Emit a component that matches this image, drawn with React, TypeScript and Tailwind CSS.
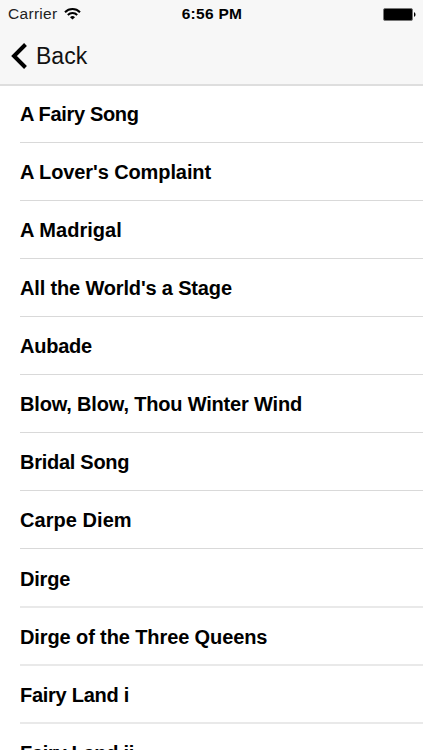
type Row = { name: string; tracking: string };

const rows: Row[] = [
  { name: 'A Fairy Song', tracking: 'tracking-[-0.33px]' },
  { name: "A Lover's Complaint", tracking: 'tracking-[-0.1px]' },
  { name: 'A Madrigal', tracking: 'tracking-[0.03px]' },
  { name: "All the World's a Stage", tracking: 'tracking-[-0.16px]' },
  { name: 'Aubade', tracking: 'tracking-[-0.25px]' },
  { name: 'Blow, Blow, Thou Winter Wind', tracking: 'tracking-[-0.18px]' },
  { name: 'Bridal Song', tracking: 'tracking-[-0.27px]' },
  { name: 'Carpe Diem', tracking: 'tracking-[0.05px]' },
  { name: 'Dirge', tracking: 'tracking-[-0.2px]' },
  { name: 'Dirge of the Three Queens', tracking: 'tracking-[-0.11px]' },
  { name: 'Fairy Land i', tracking: 'tracking-[-0.27px]' },
  { name: 'Fairy Land ii', tracking: 'tracking-[-0.3px]' },
];

function rowShape(index: number) {
  if (index < 8) return 'h-[58px] border-b border-[#d9d9d9] pt-[15px]';
  if (index === 8) return 'h-[59px] border-b-2 border-[#e9e9e9] pt-4';
  return 'h-[58px] border-b-2 border-[#e9e9e9] pt-[15px]';
}

export default function App() {
  return (
    <div className="flex h-[750px] w-full flex-col overflow-hidden bg-white font-['Liberation_Sans',sans-serif] text-black">
      <header className="h-[86px] shrink-0 border-b-2 border-[#dedede] bg-[#f7f7f7]">
        <div className="grid h-7 grid-cols-3 items-center pl-2 pr-[7px]">
          <div className="flex items-center gap-[7px]">
            <span className="text-[15.5px] leading-7 tracking-[0.3px] text-[#222]">Carrier</span>
            <svg width="17" height="12" viewBox="0 0 17 12" fill="none" stroke="#000" strokeWidth="2">
              <path d="M1 4.2a10.6 10.6 0 0 1 15 0M3.8 7a6.7 6.7 0 0 1 9.4 0" />
              <path d="M8.5 11.6 6 9.2a3.6 3.6 0 0 1 5 0Z" fill="#000" stroke="none" />
            </svg>
          </div>
          <span className="text-center text-[15.5px] font-bold leading-7 tracking-[0.3px]">6:56 PM</span>
          <svg className="justify-self-end" width="33" height="13" viewBox="0 0 33 13">
            <rect x=".5" y=".5" width="29" height="12" rx="1.5" fill="#000" stroke="#777" />
            <path d="M31 4.2c2 .6 2 4 0 4.6Z" />
          </svg>
        </div>
        <div className="flex h-14 items-center gap-[9px] pl-[11px]">
          <svg width="16" height="26" viewBox="0 0 16 26" fill="none" stroke="#000" strokeWidth="4">
            <path d="M14.5 1.5 3 13l11.5 11.5" />
          </svg>
          <span className="text-[23px] leading-7 text-[#111]">Back</span>
        </div>
      </header>
      <ul className="-mt-px flex flex-col">
        {rows.map(({ name, tracking }, index) => (
          <li key={name} className={`ml-5 flex shrink-0 items-start ${rowShape(index)}`}>
            <span className={`whitespace-nowrap text-[20px] font-bold leading-7 ${tracking}`}>{name}</span>
          </li>
        ))}
      </ul>
    </div>
  );
}
